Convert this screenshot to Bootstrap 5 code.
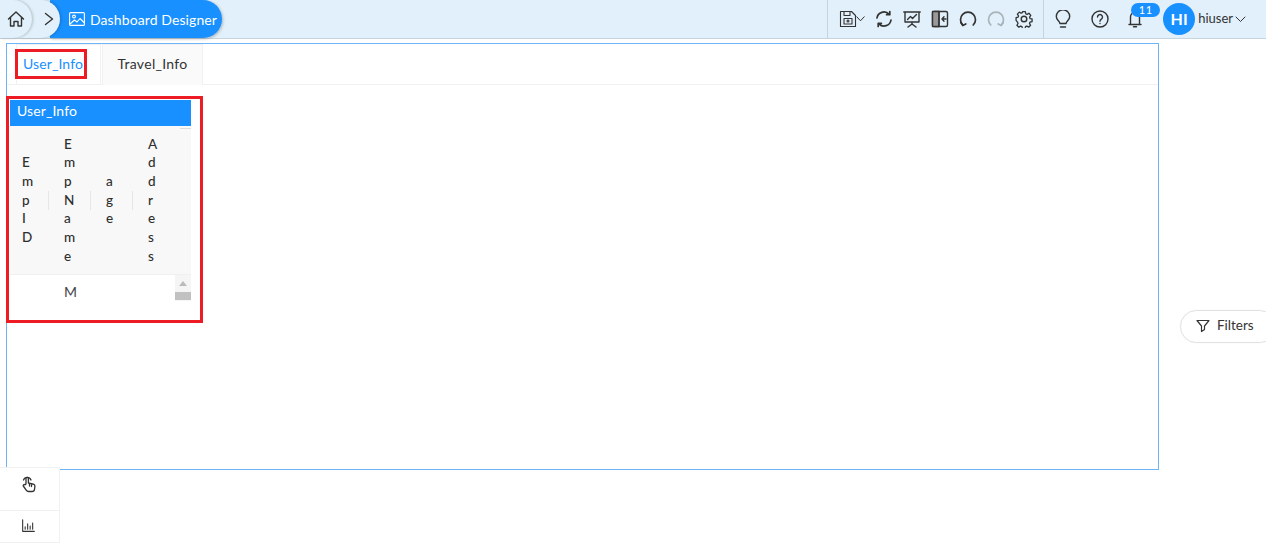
<!DOCTYPE html>
<html lang="en">
<head>
<meta charset="utf-8">
<title>Dashboard Designer</title>
<link rel="stylesheet" href="https://cdn.jsdelivr.net/npm/bootstrap@5.3.0/dist/css/bootstrap.min.css">
<style>
html,body{height:543px;overflow:hidden;background:#fff}
body{font-family:"Lato","Liberation Sans",sans-serif;font-size:13px;color:#333;position:relative}
svg{display:block;fill:none;stroke:#333;stroke-width:1.4;stroke-linecap:round;stroke-linejoin:round}
.topbar{height:39px;background:#e1f0fa;border-bottom:1px solid #c6d4de}
.crumb-home{width:32px;height:38px;border-radius:0 19px 19px 0;background:#e1f0fa;box-shadow:1px 0 3px rgba(0,0,0,.22);z-index:3}
.crumb-next{width:40px;height:38px;margin-left:-12px;padding-left:24px;border-radius:0 19px 19px 0;background:#e1f0fa;box-shadow:1px 0 3px rgba(0,0,0,.22);z-index:2}
.crumb-main{height:38px;width:172px;margin-left:-10px;padding-left:19px;gap:5px;background:#1890ff;color:#fff;border-radius:0 19px 19px 0;font-size:14px;letter-spacing:.1px;box-shadow:1px 1px 3px rgba(0,0,0,.25);z-index:1;white-space:nowrap}
.crumb-main svg{stroke:#fff;stroke-width:1.1}
.tools{height:38px;border-left:1px solid #c6d4de;border-right:1px solid #c6d4de;padding:0 10px 0 11px;gap:10px;margin-right:10px}
.tools svg,.aids svg{width:18px;height:18px}
.tools .saved-caret{width:9px;height:6px;margin-left:-1px;flex:none;stroke-width:1}
.tools .saved-disk{stroke-width:1.1}
.tools .cycle-icon{stroke-width:1.7}
.aids{gap:19px;margin-right:2px}
.aids .bell-icon{width:14px;height:18px}
.bell-box{width:21px;height:38px}
.count{top:3px;left:3px;width:29px;height:14px;border-radius:7px;background:#1890ff;color:#fff;font-size:11px;line-height:14px;text-align:center;letter-spacing:.5px}
.avatar{width:32px;height:32px;border-radius:50%;background:#1890ff;color:#fff;font-size:16px;font-weight:700;margin-left:12px}
.uname{font-size:13px;margin-left:3px;margin-right:2px}
.user-caret{margin-right:20px;stroke-width:1}
.frame{height:427px;width:1153px;margin:4px 0 0 6px;border:1px solid #6db5f5}
.tabstrip{height:41px;padding-left:9px;border-bottom:1px solid #f1f1f1;gap:1px}
.tabitem{height:41px;border:1px solid #f1f1f1;border-bottom:0;font-size:14px;display:flex;align-items:center;justify-content:center;letter-spacing:.1px}
.tab-one{width:85px;color:#1890ff;justify-content:flex-start}
.tab-two{width:101px;background:#fafafa;letter-spacing:.3px;padding-bottom:3px}
.tab-mark{width:72px;height:30px;border:3px solid #ed1c24;display:flex;align-items:center;padding-left:5px;margin:-3px 0 0 -2px;white-space:nowrap}
.widget-mark{width:197px;height:227px;margin:11px 0 0 -1px;border:3px solid #ed1c24;padding:1px}
.widget-title{width:181px;height:26px;background:#1890ff;color:#fff;font-size:14px;line-height:21px;padding-left:7px;letter-spacing:.1px}
.grid-wrap{width:181px}
.grid-head{height:149px;background:#f8f8f8;border-bottom:1px solid #f0f0f0;position:relative}
.grid-head::after{content:"";position:absolute;right:0;top:2px;width:11px;border-top:1px solid #dcdcdc}
.head-cell{width:42px;padding-left:16px;height:100%;font-weight:500;font-size:13.5px;line-height:18.7px;position:relative;display:flex;align-items:center;color:#2f2f2f}
.head-cell:first-child{width:38px;padding-left:12px}
.head-cell+.head-cell::before{content:"";position:absolute;left:0;top:65px;height:19px;border-left:1px solid #e6e6e6}
.letters{width:1px;word-break:break-all}
.grid-body{height:26px}
.m-cell{margin-left:54px;font-size:14px;line-height:34px;color:#444}
.scroll-track{width:16px;height:26px;background:#f5f5f5}
.scroll-up{width:0;height:0;border:4px solid transparent;border-top:0;border-bottom:5px solid #bbb;margin:6px auto 6px}
.scroll-thumb{height:8px;background:#c1c1c1}
.filter-pill{position:absolute;left:1180px;top:310px;width:96px;height:33px;border:1px solid #e2e2e2;border-radius:17px;background:#fff;font-size:13.5px;color:#333;padding:0 0 2px 15px;gap:7px;box-shadow:0 0 2px rgba(0,0,0,.05)}
.filter-pill svg{width:14px;height:14px;stroke-width:1.2}
.side-tools{position:absolute;left:0;top:467px;width:60px;height:76px;background:#fff;border:1px solid #f1f1f1;border-left:0}
.side-tool{height:42px;padding-top:7px;padding-right:2px}
.side-tool+.side-tool{height:33px;border-top:1px solid #f1f1f1;padding-top:7px}
.side-tool svg{width:18px;height:18px;stroke-width:1.3;margin:0 auto}
.side-tool+.side-tool svg{width:15px;height:15px}
.muted-icon{stroke:#a9b4ba}
</style>
</head>
<body>
<header class="topbar d-flex align-items-start">
  <div class="crumb-home d-flex align-items-center justify-content-center position-relative">
    <svg width="18" height="18" viewBox="0 0 18 18"><path d="M1.500 9 9 2l7.500 7M3.500 7.500V16h3.500v-4.500h4V16h3.500V7.500"/></svg>
  </div>
  <div class="crumb-next d-flex align-items-center position-relative">
    <svg width="10" height="14" viewBox="0 0 10 14"><path d="M1.500 1.500 8.500 7l-7 5.500"/></svg>
  </div>
  <div class="crumb-main d-flex align-items-center position-relative">
    <svg width="16" height="14" viewBox="0 0 16 14"><rect x=".6" y=".6" width="14.800" height="12.800" rx="1"/><circle cx="5" cy="4.500" r="1.400"/><path d="m1 12 4.500-4 2.500 2 3-3.500 4 4"/></svg>
    <span>Dashboard Designer</span>
  </div>
  <div class="ms-auto d-flex align-items-center">
    <div class="tools d-flex align-items-center">
      <div class="d-flex align-items-center">
        <svg class="saved-disk" viewBox="0 0 18 18"><path d="M1.500 1.500h11l4 4v11h-15zM5 1.500v4h6v-4"/><rect x="5" y="8.500" width="8" height="5.500"/><circle cx="9" cy="11" r="1"/></svg>
        <svg class="saved-caret" viewBox="0 0 9 6"><path d="m.8.800 3.700 4 3.700-4"/></svg>
      </div>
      <svg class="cycle-icon" viewBox="0 0 18 18"><path d="M2 8a7 7 0 0 1 12-3.800M16 10a7 7 0 0 1-12 3.800M14.800 1.500v3.200h-3.200M3.200 16.500v-3.200h3.200"/></svg>
      <svg viewBox="0 0 18 18"><path d="M.8 2h16.400M2 2v10h14V2M9 12v2M5 17l4-3 4 3M4.500 9.500l3-3 2 2 4-4"/></svg>
      <svg viewBox="0 0 18 18"><rect x="1.500" y="1.500" width="15" height="15" rx="1.500"/><path d="M1.500 1.500H8v15H1.500z" fill="#999"/><path d="M8 1.500v15"/><path d="m15 9h-3.500M13 6.800 11 9l2 2.200"/></svg>
      <svg class="cycle-icon" viewBox="0 0 18 18"><path d="M3.800 15A7.500 7.500 0 1 1 14.200 15"/><path d="M1.800 12.500 3.800 15.500l3-1.500"/></svg>
      <svg class="cycle-icon muted-icon" viewBox="0 0 18 18"><path d="M3.800 15A7.500 7.500 0 1 1 14.200 15"/><path d="M16.200 12.500 14.200 15.500l-3-1.500"/></svg>
      <svg viewBox="0 0 18 18"><circle cx="9" cy="9" r="2.800"/><path d="M7.500 1h3l.4 2.300 1.500.7 2-1.200 2 2.300-1.300 1.900.5 1.500 2.200.5v2.900l-2.200.5-.6 1.500 1.200 2-2.100 2-1.900-1.200-1.500.6-.5 2.200h-2.900l-.5-2.200-1.500-.6-1.900 1.200-2.100-2 1.200-2-.6-1.500L.4 10.500V7.600l2.200-.5.5-1.500L1.800 3.700 3.900 1.500l2 1.200 1.300-.6z" transform="translate(.7 .7) scale(.92)"/></svg>
    </div>
    <div class="aids d-flex align-items-center">
      <svg viewBox="0 0 18 18"><path d="M6 13.500C5.500 11 2.300 10 2.300 6.500a6.700 6.700 0 0 1 13.400 0c0 3.500-3.200 4.500-3.700 7zM6.500 17h5"/></svg>
      <svg viewBox="0 0 18 18"><circle cx="9" cy="9" r="8"/><path d="M6.500 7a2.500 2.500 0 1 1 3.800 2.200C9.400 9.800 9 10.200 9 11.200M9 13.500v.1"/></svg>
      <div class="bell-box position-relative d-flex align-items-center">
        <svg class="bell-icon" viewBox="0 0 14 18"><path d="M1 14.500h12M2.500 14.500V7a4.500 4.500 0 0 1 9 0v7.500M5.500 16.800h3"/></svg>
        <span class="count position-absolute">11</span>
      </div>
    </div>
    <div class="avatar d-flex align-items-center justify-content-center">HI</div>
    <span class="uname">hiuser</span>
    <svg class="user-caret" width="11" height="7" viewBox="0 0 11 7"><path d="m1 1 4.500 4.500L10 1"/></svg>
  </div>
</header>

<main class="frame">
  <div class="tabstrip d-flex">
    <div class="tabitem tab-one"><span class="tab-mark">User_Info</span></div>
    <div class="tabitem tab-two">Travel_Info</div>
  </div>
  <section class="widget-mark">
    <div class="widget-title">User_Info</div>
    <div class="grid-wrap">
      <div class="grid-head d-flex">
        <div class="head-cell"><div class="letters">EmpID</div></div>
        <div class="head-cell"><div class="letters">EmpName</div></div>
        <div class="head-cell"><div class="letters">age</div></div>
        <div class="head-cell"><div class="letters">Address</div></div>
      </div>
      <div class="grid-body d-flex justify-content-between">
        <div class="m-cell">M</div>
        <div class="scroll-track"><div class="scroll-up"></div><div class="scroll-thumb"></div></div>
      </div>
    </div>
  </section>
</main>

<button type="button" class="filter-pill d-flex align-items-center">
  <svg viewBox="0 0 14 14"><path d="M1 1.500h12L8.500 7v3.500L5.500 12.500V7z"/></svg>
  <span>Filters</span>
</button>

<aside class="side-tools">
  <div class="side-tool">
    <svg viewBox="0 0 18 18"><path d="M6 9V3.500a1.200 1.200 0 0 1 2.400 0V8l5 1.200c1 .3 1.600 1 1.500 2.100l-.4 3c-.2 1.300-1 2.200-2.300 2.200H8.500c-1 0-1.700-.5-2.300-1.400L3.300 11c-.5-1 .8-2 1.700-1.200zM9.500 8.500v2.500M11.500 9v2.500M3.500 5a4 4 0 0 1 7.500 0"/></svg>
  </div>
  <div class="side-tool">
    <svg viewBox="0 0 18 18"><path d="M2 2v14h14M5 13.500v-3M8 13.500V7M11 13.500V9.500M14 13.500V6"/></svg>
  </div>
</aside>
<script src="https://cdn.jsdelivr.net/npm/bootstrap@5.3.0/dist/js/bootstrap.bundle.min.js"></script>
</body>
</html>
